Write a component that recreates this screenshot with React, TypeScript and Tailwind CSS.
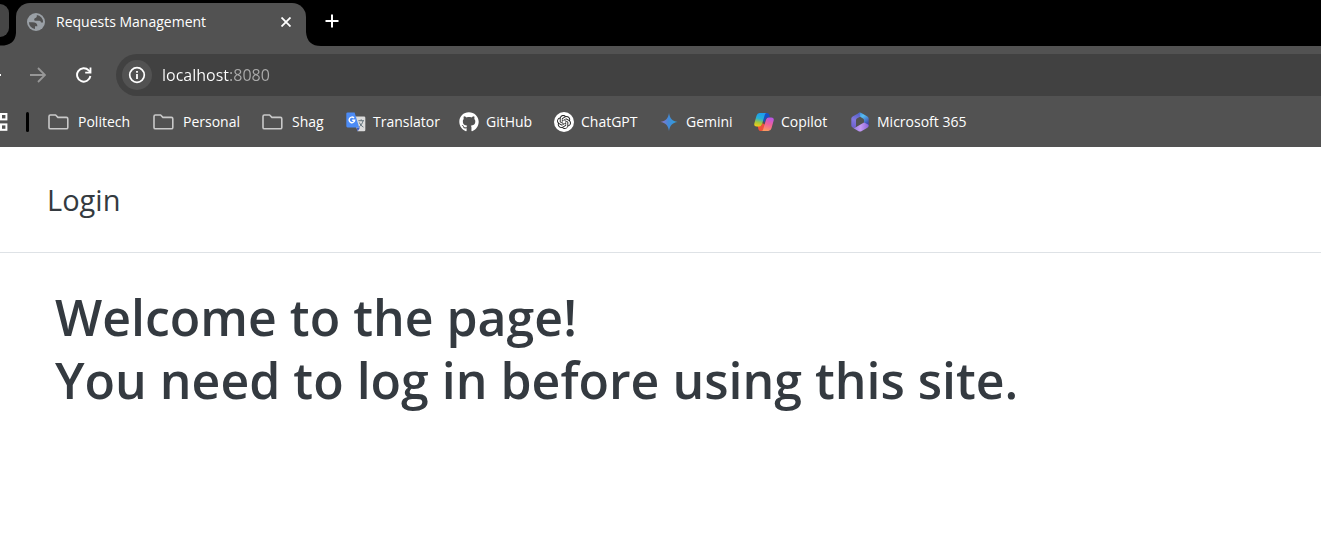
import { useState } from "react";
import type { ReactNode } from "react";
import { FaGithub } from "react-icons/fa";
import { SiOpenai } from "react-icons/si";

function GlobeIcon() {
  return (
    <svg width="18" height="18" viewBox="0 0 18 18" aria-hidden="true">
      <circle cx="9" cy="9" r="9" fill="#9aa0a6" />
      <path
        d="M1.9 9.2H5.6C8.8 9.2 10.4 10.6 10.4 13.2H8V16A7.1 7.1 0 0 1 1.9 9.2Z"
        fill="#525252"
      />
      <path
        d="M9.8 1.9A7.2 7.2 0 0 1 16.1 9.4H14C13.8 7.9 12.8 7.8 11 7.8H8.2C6.8 7.6 6.8 5.2 8.4 4.9C9.8 4.6 9.9 3.4 9.8 1.9Z"
        fill="#525252"
      />
    </svg>
  );
}

function FolderIcon() {
  return (
    <svg width="21" height="16" viewBox="0 0 21 16" fill="none" stroke="#c9c9c9" strokeWidth="1.6" strokeLinejoin="round" aria-hidden="true">
      <path d="M1 2.4Q1 1 2.4 1H7.6L9.9 3.4H18.4Q19.8 3.4 19.8 4.8V13.4Q19.8 14.8 18.4 14.8H2.4Q1 14.8 1 13.4Z" />
    </svg>
  );
}

function TranslateIcon() {
  return (
    <svg width="20" height="20" viewBox="0 0 20 20" fill="none" aria-hidden="true">
      <path d="M7 4.5H18Q19.3 4.5 19.3 5.8V18Q19.3 19.3 18 19.3H11.5Z" fill="#dcdcdc" />
      <path d="M10.6 15.6H14L11.6 19.6Z" fill="#3a5bc7" />
      <path d="M12.4 8.7H18M15.2 7.3V8.7M17 8.9C16.4 11.5 14.8 13.5 13.4 14.7M13.4 10.5C14.2 12.5 15.6 14.1 17.4 15.1" stroke="#62727b" strokeWidth="1" />
      <path d="M1.6 .4H8.6L13.2 15.4H1.6Q.3 15.4 .3 14.1V1.7Q.3 .4 1.6 .4Z" fill="#4c8bf5" />
      <path d="M8 6A2.8 2.8 0 1 0 8.7 8.2H6.2" stroke="#fff" strokeWidth="1.4" />
    </svg>
  );
}

function GeminiIcon() {
  return (
    <svg width="18" height="20" viewBox="0 0 18 20" aria-hidden="true">
      <defs>
        <linearGradient id="gemini" x1="0" y1="0" x2="1" y2="0">
          <stop offset="0" stopColor="#9b72cb" />
          <stop offset=".45" stopColor="#4589d8" />
          <stop offset="1" stopColor="#2aa3dc" />
        </linearGradient>
      </defs>
      <path d="M9 1C9.7 6.2 12.4 9.3 17.6 10C12.4 10.7 9.7 13.8 9 19C8.3 13.8 5.6 10.7 .4 10C5.6 9.3 8.3 6.2 9 1Z" fill="url(#gemini)" />
    </svg>
  );
}

function CopilotIcon() {
  return (
    <svg width="20" height="20" viewBox="0 0 20 20" aria-hidden="true">
      <defs>
        <linearGradient id="copilotLeft" x1=".5" y1="0" x2=".3" y2="1">
          <stop offset="0" stopColor="#1c9cf0" />
          <stop offset=".4" stopColor="#27b0d5" />
          <stop offset=".7" stopColor="#a5c63b" />
          <stop offset="1" stopColor="#f5cc18" />
        </linearGradient>
        <linearGradient id="copilotRight" x1=".7" y1="0" x2=".4" y2="1">
          <stop offset="0" stopColor="#b655e8" />
          <stop offset=".5" stopColor="#f0609a" />
          <stop offset="1" stopColor="#fb9a60" />
        </linearGradient>
      </defs>
      <path d="M10 1H13.2Q14.7 1 15.2 2.6L16 5.4H13.6Q12.2 5.4 11.6 7L10.6 10.4L8.6 8Z" fill="#174fc4" />
      <path d="M3.6 14H7L8.6 11L11.2 13L10 17Q9.3 19 7.6 19H6.8Q5 19 4.5 17.4Z" fill="#ef4f3a" />
      <path d="M5.6 1H12.6Q11.2 1.3 10.8 2.8L8 12.2Q7.2 14.6 5.2 14.6H2.6Q-.5 14.6 .4 11.3L2.5 3.8Q3.3 1 5.6 1Z" fill="url(#copilotLeft)" />
      <path d="M14.4 19H7.4Q8.8 18.7 9.2 17.2L12 7.8Q12.8 5.4 14.8 5.4H17.4Q20.5 5.4 19.6 8.7L17.5 16.2Q16.7 19 14.4 19Z" fill="url(#copilotRight)" />
    </svg>
  );
}

function Microsoft365Icon() {
  return (
    <svg width="18" height="20" viewBox="0 0 18 20" aria-hidden="true">
      <defs>
        <linearGradient id="m365Left" x1=".5" y1="0" x2=".3" y2="1">
          <stop offset="0" stopColor="#5360c8" />
          <stop offset=".5" stopColor="#8378e0" />
          <stop offset="1" stopColor="#6d5fd0" />
        </linearGradient>
        <linearGradient id="m365Right" x1="0" y1="0" x2=".6" y2="1">
          <stop offset="0" stopColor="#3f7fd8" />
          <stop offset=".4" stopColor="#55bdf0" />
          <stop offset="1" stopColor="#4048b0" />
        </linearGradient>
        <linearGradient id="m365Base" x1="0" y1=".5" x2="1" y2=".5">
          <stop offset="0" stopColor="#8d78e4" />
          <stop offset=".5" stopColor="#c49af4" />
          <stop offset="1" stopColor="#8a62d8" />
        </linearGradient>
      </defs>
      <path d="M7.6 .9Q9 .1 10.4 .9L16.4 4.4Q17.7 5.1 17.7 6.6V13.4Q17.4 14 16 13.2L13 11.4V8Q13 7 12 6.4L9.6 5L7 4Z" fill="url(#m365Right)" />
      <path d="M8.8 .4L1.6 4.4Q.3 5.1 .3 6.6V13.4Q.3 15 1.8 15.6Q3.6 16 5 14.6V8.2Q5 7 6.2 6.3L9.6 4.4Q8.2 3 8.8 .4Z" fill="url(#m365Left)" />
      <path d="M1.4 15.5Q3.4 16 5.2 14.9L13 10.6L16.6 12.2Q17.7 12.8 17.7 13.8Q17.7 15 16.4 15.7L10.4 19.2Q9 20 7.6 19.2Z" fill="url(#m365Base)" />
    </svg>
  );
}

type Bookmark = { label: string; width: string; gap: string; icon: ReactNode };

const bookmarks: Bookmark[] = [
  { label: "Politech", width: "w-[105px]", gap: "gap-[9px]", icon: <FolderIcon /> },
  { label: "Personal", width: "w-[109px]", gap: "gap-[9px]", icon: <FolderIcon /> },
  { label: "Shag", width: "w-[84px]", gap: "gap-[9px]", icon: <FolderIcon /> },
  { label: "Translator", width: "w-[113px]", gap: "gap-[7px]", icon: <TranslateIcon /> },
  { label: "GitHub", width: "w-[95px]", gap: "gap-[7px]", icon: <FaGithub size={20} /> },
  {
    label: "ChatGPT",
    width: "w-[106px]",
    gap: "gap-[7px]",
    icon: (
      <span className="grid size-5 place-items-center rounded-full bg-white text-[#222]">
        <SiOpenai size={14} />
      </span>
    ),
  },
  { label: "Gemini", width: "w-[94px]", gap: "gap-2", icon: <GeminiIcon /> },
  { label: "Copilot", width: "w-[97px]", gap: "gap-[7px]", icon: <CopilotIcon /> },
  { label: "Microsoft 365", width: "w-[120px]", gap: "gap-2", icon: <Microsoft365Icon /> },
];

function TabStrip() {
  return (
    <div className="flex h-[46px] items-end bg-black">
      <div className="flex h-[46px] w-4 flex-col bg-black">
        <div className="mt-1 h-[33px] w-[9px] rounded-r-[10px] bg-[#464646]" />
        <svg className="-mt-1" width="16" height="13" viewBox="0 0 16 13" aria-hidden="true">
          <path d="M16 0V13H0V12.6Q15 13 16 0Z" fill="#525252" />
        </svg>
      </div>
      <div className="flex h-[43px] w-[290px] items-center gap-[11px] rounded-t-[14px] bg-[#525252] pr-[11px] pb-[6px] pl-[11px]">
        <GlobeIcon />
        <span className="flex-1 text-sm whitespace-nowrap text-white">Requests Management</span>
        <button type="button" aria-label="Close tab" className="grid size-[18px] place-items-center">
          <svg width="10" height="10" viewBox="0 0 10 10" stroke="#fff" strokeWidth="1.8" aria-hidden="true">
            <path d="M.5 .5L9.5 9.5M9.5 .5L.5 9.5" />
          </svg>
        </button>
      </div>
      <svg width="16" height="14" viewBox="0 0 16 14" aria-hidden="true">
        <path d="M0 0V14H15Q1 14 0 0Z" fill="#525252" />
      </svg>
      <button type="button" aria-label="New tab" className="mb-[18px] grid size-[14px] place-items-center self-end">
        <svg className="overflow-visible" width="14" height="14" viewBox="0 0 14 14" stroke="#fff" strokeWidth="2" aria-hidden="true">
          <path d="M3.5 7H16.5M10 .5V13.5" />
        </svg>
      </button>
    </div>
  );
}

function AddressRow() {
  const [url, setUrl] = useState("localhost:8080");
  return (
    <div className="flex items-center pt-2">
      <button type="button" aria-label="Back" className="-ml-4 grid h-10 w-[18px] place-items-center">
        <svg width="16" height="16" viewBox="0 0 16 16" fill="none" stroke="#fff" strokeWidth="1.8" aria-hidden="true">
          <path d="M16 8H2M8 1L1 8L8 15" />
        </svg>
      </button>
      <button type="button" aria-label="Forward" disabled className="ml-7 grid h-10 w-4 place-items-center">
        <svg width="16" height="16" viewBox="0 0 16 16" fill="none" stroke="#979797" strokeWidth="1.8" aria-hidden="true">
          <path d="M0 8H14M8 1L15 8L8 15" />
        </svg>
      </button>
      <button type="button" aria-label="Reload" className="ml-[30px] grid h-10 w-4 place-items-center">
        <svg width="16" height="16" viewBox="0 0 16 16" fill="none" aria-hidden="true">
          <path d="M14.4 9A6.7 6.7 0 1 1 12.7 3.4L14 4.8" stroke="#fff" strokeWidth="1.9" />
          <path d="M15.4 .4V6.6H9.2V4.8H13.6V.4Z" fill="#fff" />
        </svg>
      </button>
      <div className="ml-6 flex h-[42px] flex-1 items-center gap-[10px] rounded-l-full bg-[#414141] pl-[6px]">
        <button type="button" aria-label="View site information" className="grid size-[30px] shrink-0 place-items-center rounded-full bg-[#525252]">
          <svg width="18" height="18" viewBox="0 0 18 18" fill="none" aria-hidden="true">
            <circle cx="9" cy="9" r="7.3" stroke="#fff" strokeWidth="1.7" />
            <path d="M9 8V13M9 5V6.7" stroke="#fff" strokeWidth="1.8" />
          </svg>
        </button>
        <input
          type="text"
          aria-label="Address"
          spellCheck={false}
          value={url}
          onChange={(event) => setUrl(event.target.value)}
          className="min-w-0 flex-1 bg-[linear-gradient(to_right,#fff_67px,#ababab_67px)] bg-clip-text text-base text-transparent caret-white outline-none"
        />
      </div>
    </div>
  );
}

function BookmarksBar() {
  return (
    <nav aria-label="Bookmarks" className="flex h-[51px] items-center">
      <button type="button" aria-label="Apps" className="w-2">
        <svg width="8" height="18" viewBox="0 0 8 18" fill="none" stroke="#fff" strokeWidth="2" aria-hidden="true">
          <rect x="1" y="1" width="5.4" height="5.4" />
          <rect x="1" y="11.4" width="5.4" height="5.4" />
        </svg>
      </button>
      <div className="ml-[18px] h-5 w-[3px] rounded-full bg-black" />
      <div className="ml-[19px] flex items-center">
        {bookmarks.map((item) => (
          <a
            key={item.label}
            href="#"
            className={`flex shrink-0 items-center whitespace-nowrap text-sm text-white ${item.gap} ${item.width}`}
          >
            {item.icon}
            <span>{item.label}</span>
          </a>
        ))}
      </div>
    </nav>
  );
}

export default function App() {
  return (
    <div className="min-h-screen overflow-hidden bg-white font-['Segoe_UI','Open_Sans','Noto_Sans',sans-serif]">
      <TabStrip />
      <div className="bg-[#525252]">
        <AddressRow />
        <BookmarksBar />
      </div>
      <header className="border-b border-[#dee2e6] px-[47px] py-8 text-[#343a40]">
        <a href="#" className="block w-fit text-[29px] leading-[41px]">
          Login
        </a>
      </header>
      <main className="px-[55px] py-[33px]">
        <h1 className="text-[50px] leading-[63px] font-semibold text-[#343a40]">
          Welcome to the page!
          <br />
          You need to log in before using this site.
        </h1>
      </main>
    </div>
  );
}
